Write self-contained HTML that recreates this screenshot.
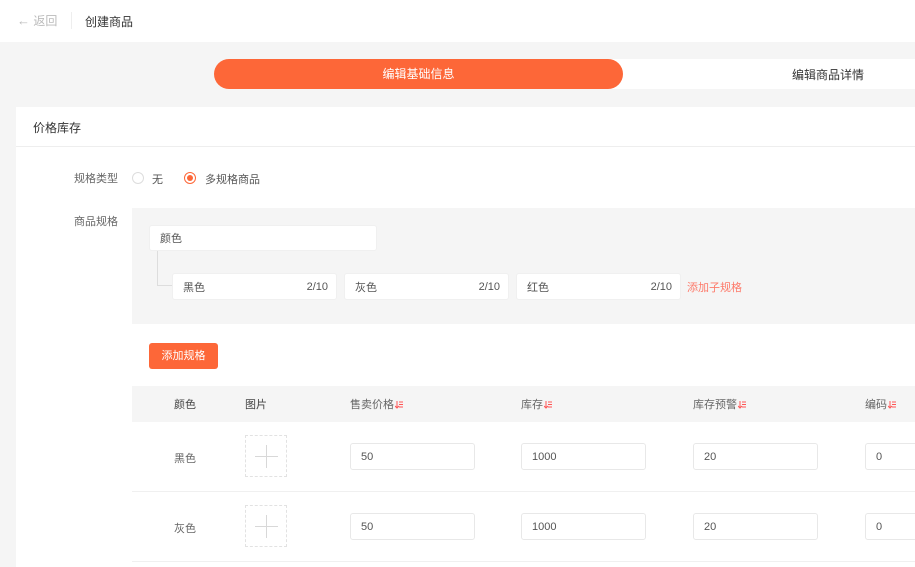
<!DOCTYPE html>
<html><head><meta charset="utf-8"><style>
*{margin:0;padding:0;box-sizing:border-box}
body{width:915px;height:565px;overflow:hidden;background:#f5f5f5;font-family:"Liberation Sans","Noto Sans CJK SC",sans-serif;font-size:11px;color:#333;position:relative}
.a{position:absolute}
.inp{position:absolute;background:#fff;border:1px solid #e8e8e8;border-radius:3px;height:27px;display:flex;align-items:center;padding-left:10px;color:#555;font-size:11px}
.th{position:absolute;top:396px;color:#666;font-size:11px}
.sort{display:inline-block;width:8px;height:8px;vertical-align:middle;margin-left:1px}
.img{position:absolute;width:42px;height:42px;border:1px dashed #e2e2e2}
.img:before{content:"";position:absolute;left:9px;top:20px;width:23px;height:1px;background:#d8d8d8}
.img:after{content:"";position:absolute;left:20px;top:9px;width:1px;height:23px;background:#d8d8d8}
</style></head><body>
<div class="a" style="left:0;top:0;width:915px;height:42px;background:#fff"></div>
<div class="a" style="left:17px;top:12px;color:#bbb;font-size:12px"><span style="font-size:13px">←</span> 返回</div>
<div class="a" style="left:71px;top:12px;width:1px;height:17px;background:#eee"></div>
<div class="a" style="left:85px;top:13px;color:#333;font-size:12px">创建商品</div>
<div class="a" style="left:600px;top:59px;width:315px;height:30px;background:#fff"></div>
<div class="a" style="left:792px;top:66px;font-size:12px;color:#333">编辑商品详情</div>
<div class="a" style="left:214px;top:59px;width:409px;height:30px;background:#fd6738;border-radius:15px;color:#fff;font-size:12px;text-align:center;line-height:30px">编辑基础信息</div>
<div class="a" style="left:16px;top:107px;width:899px;height:460px;background:#fff"></div>
<div class="a" style="left:16px;top:146px;width:899px;height:1px;background:#eee"></div>
<div class="a" style="left:33px;top:119px;font-size:12px;color:#333">价格库存</div>
<div class="a" style="left:74px;top:170px;color:#666">规格类型</div>
<div class="a" style="left:132px;top:172px;width:12px;height:12px;border:1px solid #ddd;border-radius:50%"></div>
<div class="a" style="left:152px;top:171px;color:#555">无</div>
<div class="a" style="left:184px;top:172px;width:12px;height:12px;border:1px solid #fd6738;border-radius:50%"><div style="margin:2px;width:6px;height:6px;border-radius:50%;background:#fd6738"></div></div>
<div class="a" style="left:205px;top:171px;color:#555">多规格商品</div>
<div class="a" style="left:74px;top:213px;color:#666">商品规格</div>
<div class="a" style="left:132px;top:208px;width:783px;height:116px;background:#f5f5f5"></div>
<div class="inp" style="left:149px;top:225px;width:228px;height:26px;border-color:#f0f0f0">颜色</div>
<div class="a" style="left:157px;top:251px;width:15px;height:35px;border-left:1px solid #ddd;border-bottom:1px solid #ddd"></div>
<div class="inp" style="left:172px;top:273px;width:165px;border-color:#f0f0f0">黑色<span style="position:absolute;right:8px">2/10</span></div>
<div class="inp" style="left:344px;top:273px;width:165px;border-color:#f0f0f0">灰色<span style="position:absolute;right:8px">2/10</span></div>
<div class="inp" style="left:516px;top:273px;width:165px;border-color:#f0f0f0">红色<span style="position:absolute;right:8px">2/10</span></div>
<div class="a" style="left:687px;top:279px;color:#fd7a6a">添加子规格</div>
<div class="a" style="left:149px;top:343px;width:69px;height:26px;background:#fd6738;border-radius:3px;color:#fff;text-align:center;line-height:26px">添加规格</div>
<div class="a" style="left:132px;top:386px;width:783px;height:36px;background:#f5f5f5"></div>
<div class="th" style="left:174px;color:#444">颜色</div>
<div class="th" style="left:245px;color:#444">图片</div>
<div class="th" style="left:350px">售卖价格<svg class="sort" viewBox="0 0 8 8"><path d="M2 0V7M0 5L2 7L4 5M4 1H8M4 3.5H8M4 6H8" stroke="#f55" stroke-width="1" fill="none"/></svg></div>
<div class="th" style="left:521px">库存<svg class="sort" viewBox="0 0 8 8"><path d="M2 0V7M0 5L2 7L4 5M4 1H8M4 3.5H8M4 6H8" stroke="#f55" stroke-width="1" fill="none"/></svg></div>
<div class="th" style="left:693px">库存预警<svg class="sort" viewBox="0 0 8 8"><path d="M2 0V7M0 5L2 7L4 5M4 1H8M4 3.5H8M4 6H8" stroke="#f55" stroke-width="1" fill="none"/></svg></div>
<div class="th" style="left:865px">编码<svg class="sort" viewBox="0 0 8 8"><path d="M2 0V7M0 5L2 7L4 5M4 1H8M4 3.5H8M4 6H8" stroke="#f55" stroke-width="1" fill="none"/></svg></div>
<div class="a" style="left:174px;top:450px;color:#666">黑色</div>
<div class="img" style="left:245px;top:435px"></div>
<div class="inp" style="left:350px;top:443px;width:125px">50</div>
<div class="inp" style="left:521px;top:443px;width:125px">1000</div>
<div class="inp" style="left:693px;top:443px;width:125px">20</div>
<div class="inp" style="left:865px;top:443px;width:60px">0</div>
<div class="a" style="left:132px;top:491px;width:783px;height:1px;background:#f0f0f0"></div>
<div class="a" style="left:174px;top:520px;color:#666">灰色</div>
<div class="img" style="left:245px;top:505px"></div>
<div class="inp" style="left:350px;top:513px;width:125px">50</div>
<div class="inp" style="left:521px;top:513px;width:125px">1000</div>
<div class="inp" style="left:693px;top:513px;width:125px">20</div>
<div class="inp" style="left:865px;top:513px;width:60px">0</div>
<div class="a" style="left:132px;top:561px;width:783px;height:1px;background:#f0f0f0"></div>
</body></html>
